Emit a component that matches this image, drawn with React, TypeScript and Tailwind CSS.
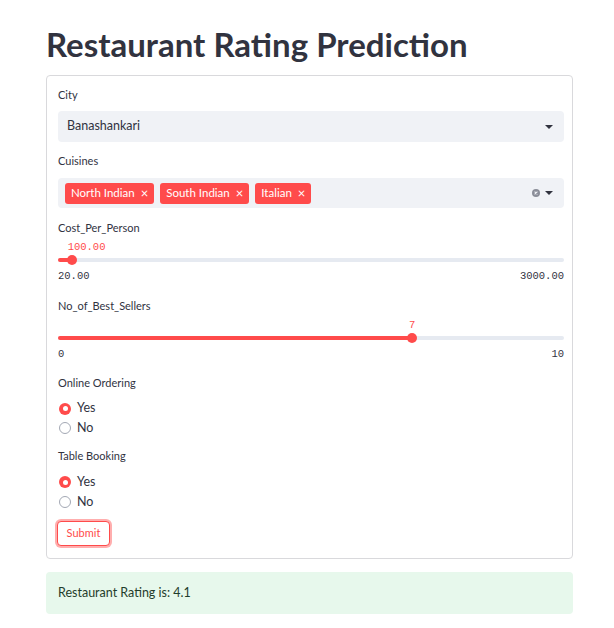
import React from "react";

const sans = "font-['Lato','Noto_Sans',sans-serif]";
const mono = "font-['Liberation_Mono','DejaVu_Sans_Mono',monospace]";

const Label: React.FunctionComponent<{ text: string }> = ({ text }) => (
  <div className="h-[16px] text-[11px] leading-[16px] text-[#31333f]">{text}</div>
);

const Caret = () => (
  <svg width="8" height="4" viewBox="0 0 8 4" className="block">
    <path d="M0 0h8L4 4z" fill="#31333f" />
  </svg>
);

const Tag: React.FunctionComponent<{ text: string }> = ({ text }) => (
  <div className="flex h-[21px] items-center rounded-[3px] bg-[#ff4b4b] pl-[6px] pr-[6px] text-[11.5px] text-white">
    {text}
    <span className="ml-[6px] text-[13px] leading-none">×</span>
  </div>
);

const Slider: React.FunctionComponent<{
  pct: number;
  value: string;
  min: string;
  max: string;
  center?: boolean;
}> = ({ pct, value, min, max, center }) => (
  <div>
    <div className="relative h-[19px]">
      <span
        className={`absolute top-[3px] text-[10.5px] leading-[16px] text-[#ff4b4b] ${mono} ${center ? "-translate-x-1/2" : ""}`}
        style={{ left: center ? `${pct}%` : `calc(${pct}% - 4px)` }}
      >
        {value}
      </span>
    </div>
    <div className="relative flex h-[10px] items-center">
      <div className="h-[4px] w-full rounded-full bg-[#e6eaf1]" />
      <div className="absolute left-0 h-[4px] rounded-full bg-[#ff4b4b]" style={{ width: `${pct}%` }} />
      <div
        className="absolute h-[10px] w-[10px] -translate-x-1/2 rounded-full bg-[#ff4b4b]"
        style={{ left: `${pct}%` }}
      />
    </div>
    <div className={`mt-[4px] flex h-[16px] items-center justify-between text-[10.5px] text-[#31333f] ${mono}`}>
      <span>{min}</span>
      <span>{max}</span>
    </div>
  </div>
);

const Radio: React.FunctionComponent<{ text: string; on?: boolean; tight?: boolean }> = ({ text, on, tight }) => (
  <div
    className={`flex ${tight ? "h-[19px]" : "h-[20px]"} items-center gap-[6px] pl-[1px] text-[12.5px] text-[#31333f]`}
  >
    {on ? (
      <span className="flex h-[12px] w-[12px] items-center justify-center rounded-full bg-[#ff4b4b]">
        <span className="h-[5px] w-[5px] rounded-full bg-white" />
      </span>
    ) : (
      <span className="h-[12px] w-[12px] rounded-full border border-[#a3a8b4] bg-white" />
    )}
    {text}
  </div>
);

export default function App() {
  return (
    <div className={`min-h-[628px] w-[614px] bg-white pl-[46px] pr-[41px] pt-[24px] ${sans}`}>
      <h1 className="h-[51px] text-[33px] font-bold leading-[40px] text-[#31333f]">
        Restaurant Rating Prediction
      </h1>
      <div className="rounded-[4px] border border-[#d9d9dc] pb-[12px] pl-[11px] pr-[8px] pt-[11px]">
        <Label text="City" />
        <div className="mt-[8px] flex h-[31px] items-center justify-between rounded-[4px] bg-[#f0f2f6] pl-[9px] pr-[11px] text-[12.5px] text-[#31333f]">
          <span>Banashankari</span>
          <Caret />
        </div>

        <div className="mt-[11px]">
          <Label text="Cuisines" />
        </div>
        <div className="mt-[9px] flex h-[30px] items-center justify-between rounded-[4px] bg-[#f0f2f6] pl-[7px] pr-[11px]">
          <div className="flex gap-[6px]">
            <Tag text="North Indian" />
            <Tag text="South Indian" />
            <Tag text="Italian" />
          </div>
          <div className="flex items-center gap-[5px]">
            <svg width="8" height="8" viewBox="0 0 8 8">
              <circle cx="4" cy="4" r="4" fill="#8a8d98" />
              <path d="M2.6 2.6l2.8 2.8M5.4 2.6l-2.8 2.8" stroke="#f0f2f6" strokeWidth="1.1" />
            </svg>
            <Caret />
          </div>
        </div>

        <div className="mt-[12px]">
          <Label text="Cost_Per_Person" />
        </div>
        <Slider pct={2.7} value="100.00" min="20.00" max="3000.00" />

        <div className="mt-[13px]">
          <Label text="No_of_Best_Sellers" />
        </div>
        <Slider pct={70} value="7" min="0" max="10" center />

        <div className="mt-[12px]">
          <Label text="Online Ordering" />
        </div>
        <div className="mt-[8px]">
          <Radio text="Yes" on tight />
          <Radio text="No" />
        </div>

        <div className="mt-[10px]">
          <Label text="Table Booking" />
        </div>
        <div className="mt-[8px]">
          <Radio text="Yes" on />
          <Radio text="No" />
        </div>

        <button className="ml-[-1px] mt-[9px] flex h-[25px] w-[53px] items-center justify-center rounded-[4px] border border-[#ff4b4b] bg-white text-[11px] text-[#ff4b4b] shadow-[0_0_0_2px_rgba(255,75,75,0.45)]">
          Submit
        </button>
      </div>

      <div className="mt-[13px] flex h-[42px] items-center rounded-[4px] bg-[#e7f8ec] pl-[12px] text-[12.5px] text-[#1f3d2b]">
        Restaurant Rating is: 4.1
      </div>
    </div>
  );
}
